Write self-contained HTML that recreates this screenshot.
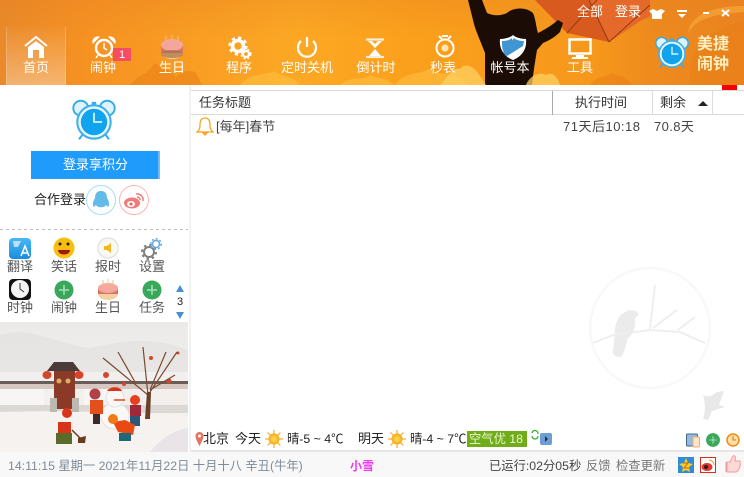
<!DOCTYPE html>
<html><head><meta charset="utf-8"><style>
html,body{margin:0;padding:0;background:#fff}
#a{position:relative;width:744px;height:477px;overflow:hidden;font-family:"Liberation Sans","Noto Sans CJK SC",sans-serif;font-size:13px;color:#333;background:#fff}
.t{position:absolute;white-space:nowrap;line-height:16px}
.n{color:#fff;font-size:13px;text-align:center;width:70px}
.g{color:#555;font-size:13px;text-align:center;width:44px}
svg{position:absolute;left:0;top:0;overflow:visible}
</style></head><body><div id="a">
<svg width="744" height="477" viewBox="0 0 744 477">
<defs>
<linearGradient id="h" x1="0" x2="1" y1="0" y2="0"><stop offset="0" stop-color="#ea8a2a"/><stop offset=".12" stop-color="#f69222"/><stop offset=".4" stop-color="#fca824"/><stop offset=".55" stop-color="#fba01c"/><stop offset=".8" stop-color="#f6981c"/><stop offset=".88" stop-color="#ee8a1e"/><stop offset="1" stop-color="#ec8420"/></linearGradient>
<linearGradient id="h2" x1="0" x2="0" y1="0" y2="1"><stop offset="0" stop-color="#e07a20" stop-opacity=".25"/><stop offset=".45" stop-color="#e07a20" stop-opacity="0"/></linearGradient>
<linearGradient id="sel" x1="0" x2="0" y1="0" y2="1"><stop offset="0" stop-color="#fff" stop-opacity=".02"/><stop offset="1" stop-color="#fff" stop-opacity=".34"/></linearGradient>
<linearGradient id="sky" x1="0" x2="0" y1="0" y2="1"><stop offset="0" stop-color="#eceae8"/><stop offset=".4" stop-color="#f2f0ee"/><stop offset="1" stop-color="#f4f1ee"/></linearGradient>
<linearGradient id="btn" x1="0" x2="0" y1="0" y2="1"><stop offset="0" stop-color="#48b8f4"/><stop offset="1" stop-color="#1a8ce0"/></linearGradient>
<radialGradient id="sun"><stop offset="0" stop-color="#ffe060"/><stop offset="1" stop-color="#f8a810"/></radialGradient>
<g id="plus"><circle r="9.500" fill="#3aa85a"/><path d="M-5 0H5M0-5V5" stroke="#a8e0b8" stroke-width="1.500"/></g>
<g id="sunny"><g stroke="#f5b040" stroke-width="1.300"><path d="M0-9V9M-9 0H9M-6.400-6.400L6.400 6.400M-6.400 6.400L6.400-6.400"/></g><circle r="5.500" fill="url(#sun)"/></g>
<g id="alarm"><circle cx="-11.500" cy="-12" r="6.500" fill="#dff3fc" stroke="#38ace8" stroke-width="1.700"/><circle cx="11.500" cy="-12" r="6.500" fill="#dff3fc" stroke="#38ace8" stroke-width="1.700"/><path d="M-10 11L-13 15M10 11L13 15" stroke="#38ace8" stroke-width="1.800"/><path d="M-2-16H2" stroke="#38ace8" stroke-width="3"/><circle r="14.500" fill="#eaf7fd" stroke="#3fb0ea" stroke-width="1.800"/><circle r="11.500" fill="#10a4ee"/><path d="M0-8V0H7" fill="none" stroke="#fff" stroke-width="1.300"/></g>
</defs>
<rect width="744" height="85" fill="url(#h)"/>
<rect width="744" height="85" fill="url(#h2)"/>
<path d="M130 85c8-12 18-8 24-22 8 4 16 6 22 14 5-6 14-8 20-4l6 12z" fill="#e87c14" opacity=".5"/>
<path d="M240 85c12-14 24-8 34-14 8 6 18 4 26 14zM340 85c12-10 22-4 30-10 8 4 16 2 24 10zM395 85c10-14 24-10 34-16 10 8 26 0 38 16z" fill="#ffc040" opacity=".6"/>
<path d="M590 85c6-10 14-6 22-12 6 4 14 2 20 12z" fill="#e67a12" opacity=".45"/>
<path d="M690 85c-2-20 0-45 40-60l14-4v64z" fill="#e67a12" opacity=".3"/>
<path d="M688 34c6-14 24-20 56-22v-6c-30 0-54 8-56 28z" fill="#f9b040" opacity=".55"/>
<path d="M535 0H650V16L640 21 609 42 567 33Z" fill="#d85a1e"/>
<path d="M589 0H650V16L640 21 609 42Z" fill="#e4692a"/>
<path d="M567 33L597 0M589 0L609 42M609 42L650 5" stroke="#953a10" fill="none"/>
<path d="M468 0H482L487 13C494 16 500 16 507 13C512 8 525 6 533 13C536 20 536 27 538 33C544 30 551 26 558 20L563 23 560 32C555 37 550 40 543 43L537 50C535 62 533 74 532 85H485V53C481 42 475 30 473 20Z" fill="#1b0c05"/>
<path d="M440 85c6-4 10-18 20-16 4-6 12-4 18 4l8 12zM526 85c3-8 12-14 20-10 6-4 12 2 14 10z" fill="#ffd060" opacity=".75"/>
<rect x="6" y="27" width="60" height="58" fill="url(#sel)"/>
<path d="M6.500 27V85M65.500 27V85" stroke="#fff" opacity=".22"/>
<path d="M25 46L36 37 47 46" stroke="#fff" stroke-width="2" fill="none"/>
<path d="M28 47L36 41 44 47V58H39V50H33V58H28Z" fill="#fff"/>
<g transform="translate(104 48)" fill="none" stroke="#fff" stroke-width="2.400"><circle r="8"/><path d="M0-5V0L3 2" stroke-width="1.500"/><path d="M-5-11A5 5 0 0 0-11-5ZM5-11A5 5 0 0 1 11-5Z" fill="#fff" stroke-width="1"/><path d="M-6 7L-8 10M6 7L8 10" stroke-width="1.500"/></g>
<rect x="113" y="48" width="18" height="13" fill="#f64d63"/>
<g transform="translate(172 48)"><ellipse cx="0" cy="4" rx="11" ry="7" fill="#f4d0a0"/><rect x="-11" y="-3" width="22" height="8" fill="#d9746a"/><ellipse cx="0" cy="-3" rx="11" ry="6" fill="#f3a69c"/><ellipse cx="0" cy="6" rx="11" ry="4" fill="#a87040" opacity=".7"/><path d="M-6-12v5M0-13v6M6-12v5" stroke="#f8c080"/></g>
<g fill="none" stroke="#fff"><circle cx="238" cy="46" r="5.500" stroke-width="3.600"/><circle cx="238" cy="46" r="8.300" stroke-width="2.600" stroke-dasharray="3.200 3.300"/><circle cx="246" cy="54" r="3" stroke-width="2.200"/><circle cx="246" cy="54" r="4.800" stroke-width="1.400" stroke-dasharray="2 2"/></g>
<g fill="none" stroke="#fff" stroke-width="2.200"><path d="M301 41a9 9 0 1 0 12 0"/><path d="M307 37V47"/></g>
<path d="M366 39.500H384M366 57H384" stroke="#f5edd8" stroke-width="2.200"/><path d="M368 41L375 48 382 41H378L375 44 372 41Z" fill="#fff"/><path d="M369 56L375 49 381 56Z" fill="#fff"/>
<g transform="translate(445 48)" fill="none" stroke="#fff" stroke-width="2"><circle r="8.500"/><path d="M-6-12L-3-9M6-12L3-9M-3-12H3"/></g><circle cx="445" cy="48" r="3.500" fill="#ffe8b8"/>
<path d="M500 39C506 39 511 37 513 35C515 37 520 39 526 39C527 48 523 56 513 60C503 56 499 48 500 39Z" fill="#fff"/>
<path d="M502 41C506 41 510 40 512 38V46L503 51C502 48 502 44 502 41ZM514 38C516 40 520 41 524 41L523 46L507 56C505 55 504 54 503 52Z" fill="#3f96d2"/>
<rect x="569.500" y="39.500" width="21" height="14" fill="none" stroke="#fff" stroke-width="2.500"/><path d="M576 55H584V57H588V59H572V57H576Z" fill="#fff"/>
<use href="#alarm" transform="translate(672 54) scale(.9)"/>
<path d="M649 11L653 9 657 11 661 9 665 11 662 14V19H652V14Z" fill="#fff"/>
<path d="M677 10H687V12H677ZM678 14H686L682 18Z" fill="#fff"/>
<path d="M703 13H709" stroke="#fff" stroke-width="2"/><path d="M722 10L729 16M729 10L722 16" stroke="#fff" stroke-width="2"/>
<rect x="722" y="85" width="15" height="5" fill="#f80000"/>
<rect x="191" y="90" width="553" height="1" fill="#d8d8d8"/>
<rect x="191" y="114" width="553" height="1" fill="#d8d8d8"/>
<rect x="552" y="91" width="1" height="24" fill="#a8a8b0"/><rect x="652" y="91" width="1" height="24" fill="#dcdcdc"/><rect x="712" y="91" width="1" height="24" fill="#dcdcdc"/>
<path d="M698 106L703 101 708 106Z" fill="#222"/>
<path d="M205 118C201 118 200 121 200 125C200 129 199 130 197 132H213C211 130 210 129 210 125C210 121 209 118 205 118ZM203 133H207L205 135Z" fill="none" stroke="#f7a521" stroke-width="1.300"/>
<use href="#alarm" transform="translate(94 122) scale(1.150)"/>
<rect x="31" y="151" width="128" height="28" fill="#1e9bfb"/><rect x="158" y="151" width="2" height="28" fill="#6fbcf8"/>
<circle cx="101" cy="200" r="14.500" fill="#fff" stroke="#a8dcf4"/><circle cx="134" cy="200" r="14.500" fill="#fff" stroke="#fdb4b4"/>
<path d="M101 191C96 191 95 195 95 198C93 201 92 205 94 207L96 205C97 208 105 208 106 205L108 207C110 205 109 201 107 198C107 195 106 191 101 191Z" fill="#63bbe8"/>
<ellipse cx="132" cy="203" rx="8" ry="5.500" fill="#f27b78"/><ellipse cx="131" cy="204" rx="4" ry="3" fill="#fff"/><circle cx="131" cy="204" r="1.500" fill="#e85e5c"/><path d="M136 194A6 6 0 0 1 143 201M137 197A3 3 0 0 1 140 200" fill="none" stroke="#f27b78" stroke-width="1.500"/>
<path d="M0 229.500H188" stroke="#bbb" stroke-dasharray="3 3"/>
<rect x="9" y="238" width="22" height="21" rx="4" fill="url(#btn)"/><path d="M13 241H21L18 247H14Z" fill="#b8e0fa"/><path d="M21 256L25 246 29 256M22 253H28" fill="none" stroke="#fff" stroke-width="1.500"/>
<circle cx="64" cy="248" r="10.500" fill="#f9bf10"/><path d="M58 250H70C70 256 58 256 58 250Z" fill="#a01818"/><circle cx="60" cy="244" r="1.500" fill="#222"/><circle cx="68" cy="244" r="1.500" fill="#222"/>
<circle cx="108" cy="248" r="10" fill="#f8f8f4" stroke="#e4e4e4" stroke-width="1.500"/><path d="M104 246H107L111 243V253L107 250H104Z" fill="#f5b81c"/>
<g fill="none"><circle cx="149" cy="252" r="5" stroke="#808080" stroke-width="2"/><circle cx="149" cy="252" r="7" stroke="#808080" stroke-width="2" stroke-dasharray="2.500 3"/><circle cx="156" cy="244" r="3.500" stroke="#6aa8dc" stroke-width="1.500"/><circle cx="156" cy="244" r="5.200" stroke="#6aa8dc" stroke-width="1.500" stroke-dasharray="2 2"/></g>
<rect x="9" y="279" width="22" height="21" rx="4" fill="#111"/><circle cx="20" cy="289" r="9" fill="#f4f4f4"/><path d="M20 283V289L24 292" stroke="#333" fill="none"/>
<use href="#plus" x="64" y="290"/>
<g transform="translate(108 290)"><ellipse cx="0" cy="4" rx="10" ry="6" fill="#f4d0a0"/><rect x="-10" y="-2" width="20" height="6" fill="#d9746a"/><ellipse cx="0" cy="-2" rx="10" ry="5" fill="#f4a89e"/><path d="M-5-10v5M0-11v6M5-10v5" stroke="#f8c080"/></g>
<use href="#plus" x="152" y="290"/>
<path d="M176 292L180 285 184 292ZM176 312L180 319 184 312Z" fill="#4a90d0"/>
<rect x="0" y="322" width="188" height="130" fill="url(#sky)"/>
<path d="M0 335C30 325 60 345 90 348C120 342 150 335 188 350V372H0Z" fill="#e0dedc" opacity=".55"/>
<path d="M0 382H188V405H0Z" fill="#f2efec"/><path d="M0 381H188V384H0Z" fill="#6a5c58"/><path d="M0 384H188V389H0Z" fill="#d6c8c0"/>
<path d="M0 389H44V405H0ZM84 389H110V405H84Z" fill="#f8f6f5"/>
<path d="M0 405H188V413H0Z" fill="#dcd8d4"/>
<path d="M0 412C60 410 120 412 188 416V452H0Z" fill="#f5f2f0"/>
<path d="M188 428C170 432 160 440 150 452H188Z" fill="#dcd6de" opacity=".5"/>
<rect x="54" y="371" width="21" height="38" fill="#8c3a28"/><path d="M47 371L54 362H73L80 371Z" fill="#4a3a3a"/><rect x="50" y="398" width="7" height="14" fill="#bcb8b2"/><rect x="72" y="398" width="7" height="14" fill="#bcb8b2"/>
<circle cx="59" cy="381" r="2.500" fill="#d8b060"/><circle cx="68" cy="381" r="2.500" fill="#d8b060"/>
<ellipse cx="47" cy="375" rx="4.500" ry="4" fill="#d8442a"/><ellipse cx="79" cy="375" rx="4.500" ry="4" fill="#d8442a"/><circle cx="106" cy="375" r="3" fill="#d8442a"/><circle cx="124" cy="384" r="2" fill="#d8442a"/><circle cx="151" cy="358" r="2" fill="#d8442a"/><circle cx="169" cy="381" r="2.500" fill="#d8442a"/><circle cx="178" cy="353" r="1.500" fill="#d8442a"/>
<path d="M148 395L103 358M135 382L118 352M148 395L143 347M150 392L177 352M150 390L175 375M150 390L166 352" stroke="#7a4a30" stroke-width="1.200" fill="none"/><path d="M145 419L147 392 151 392 150 419Z" fill="#6a4028"/>
<ellipse cx="115" cy="416" rx="14" ry="13" fill="#faf8f7" stroke="#e2dedb" stroke-width=".8"/><circle cx="115" cy="398" r="9" fill="#faf8f7" stroke="#dedad7" stroke-width=".8"/><path d="M114 400H125" stroke="#e04a1a" stroke-width="1.500"/><path d="M107 391C110 386 120 386 122 391Z" fill="#d8341a"/>
<rect x="90" y="400" width="13" height="14" fill="#e4501c"/><circle cx="95" cy="394" r="5.500" fill="#b44048"/><rect x="93" y="414" width="7" height="10" fill="#3a2a2a"/>
<rect x="130" y="405" width="11" height="11" fill="#a02838"/><circle cx="135" cy="400" r="5" fill="#e8401c"/><rect x="130" y="416" width="10" height="10" fill="#2c5878"/>
<path d="M113 422L125 420 135 425 133 435 118 432Z" fill="#ea4a12"/><circle cx="113" cy="419" r="5" fill="#ef7a18"/><rect x="119" y="433" width="12" height="8" fill="#1e6878"/>
<path d="M58 422H71V433H58Z" fill="#d8341a"/><circle cx="67" cy="413" r="5" fill="#d8341a"/><rect x="56" y="433" width="16" height="11" fill="#5a6a2a"/><path d="M72 430L82 440" stroke="#6a3a1a" stroke-width="1.500"/><path d="M78 438L86 436 85 443 78 443Z" fill="#6a3a1a"/>
<rect x="0" y="452" width="744" height="25" fill="#f8f8f8"/>
<rect x="190" y="450" width="554" height="2" fill="#e6e6e6"/>
<rect x="189" y="85" width="2" height="366" fill="#f2f2f2"/>
<circle cx="650" cy="328" r="60" fill="none" stroke="#f8f8f6" stroke-width="2.500"/>
<path d="M613 350C616 338 612 322 622 314C628 309 635 309 639 314L635 318C636 326 634 334 628 338C626 345 624 356 620 357C616 357 612 355 613 350Z" fill="#ebebeb"/>
<path d="M593 343L613 335 650 330 680 332 705 343M650 329L655 285M653 328L677 310M678 330L695 317" fill="none" stroke="#eeeeee" stroke-width="2"/>
<path d="M703 395C708 398 712 396 717 392L724 391 719 405 725 407 712 411 708 420 703 419C706 412 705 402 703 395Z" fill="#e8e8e8"/>
<path d="M195.500 436A4 4 0 0 1 203.500 436C203.500 439 201 443 199.500 446C198 443 195.500 439 195.500 436Z" fill="#e4735f"/><circle cx="199.500" cy="436" r="1.500" fill="#fff"/>
<use href="#sunny" x="274" y="439"/><use href="#sunny" x="397" y="439"/>
<rect x="467" y="431" width="60" height="16" fill="#70ad18"/>
<path d="M532 433A3 3 0 0 1 538 434M538 436A3 3 0 0 1 532 436" fill="none" stroke="#3cb030" stroke-width="1.300"/>
<rect x="540" y="433" width="12" height="12" rx="2" fill="#6c9ed4"/><path d="M545 436L548 439 545 442Z" fill="#234"/>
<rect x="686.500" y="434" width="11" height="12" rx="1" fill="#90bce0" stroke="#4a6a88"/><rect x="693" y="437" width="6.500" height="10" rx="1" fill="#fde4c8" stroke="#f2a868"/>
<g transform="translate(713 440) scale(.73)"><use href="#plus"/></g>
<circle cx="733" cy="440" r="6" fill="#fde0a8" stroke="#f08a18" stroke-width="1.500"/><path d="M733 436V440H736" fill="none" stroke="#e07810"/>
<rect x="678" y="457" width="16" height="16" fill="#2f8ad8"/><path d="M686 458L688 463 693 464 689 467 690 472 686 470 682 472 683 467 679 464 684 463Z" fill="#fcd020"/><path d="M683 463H688L684 468H689" stroke="#d06010" fill="none"/>
<rect x="700.500" y="457.500" width="15" height="15" fill="#fff" stroke="#d83020"/><ellipse cx="707" cy="467" rx="5.500" ry="4" fill="#e6352b"/><circle cx="706" cy="467" r="2" fill="#222"/><path d="M709 460A5 5 0 0 1 714 465" stroke="#f0a020" fill="none"/>
<path d="M727 462H730L733 456C735 455 736 457 735 461H740C741 466 739 471 736 472H727ZM726 462V472" fill="#ffd8d8" stroke="#f49898"/>
</svg>
<div class="t n" style="left:1px;top:60px">首页</div>
<div class="t n" style="left:68px;top:60px">闹钟</div>
<div class="t" style="left:119px;top:47px;color:#fff;font-size:11px">1</div>
<div class="t n" style="left:137px;top:60px">生日</div>
<div class="t n" style="left:204px;top:60px">程序</div>
<div class="t n" style="left:272px;top:60px">定时关机</div>
<div class="t n" style="left:341px;top:60px">倒计时</div>
<div class="t n" style="left:408px;top:60px">秒表</div>
<div class="t n" style="left:475px;top:60px">帐号本</div>
<div class="t n" style="left:545px;top:60px">工具</div>
<div class="t" style="left:577px;top:4px;color:#fff">全部</div>
<div class="t" style="left:615px;top:4px;color:#fff">登录</div>
<div class="t" style="left:697px;top:35px;color:#fdeec0;font-size:16px;line-height:20px;font-weight:bold;width:34px">美捷<br>闹钟</div>
<div class="t" style="left:199px;top:95px">任务标题</div>
<div class="t" style="left:575px;top:95px">执行时间</div>
<div class="t" style="left:660px;top:95px">剩余</div>
<div class="t" style="left:216px;top:119px;color:#444">[每年]春节</div>
<div class="t" style="left:563px;top:119px;color:#444;letter-spacing:.5px">71天后10:18</div>
<div class="t" style="left:654px;top:119px;color:#444;letter-spacing:.4px">70.8天</div>
<div class="t" style="left:63px;top:157px;color:#fff">登录享积分</div>
<div class="t" style="left:34px;top:192px;color:#222">合作登录</div>
<div class="t g" style="left:-2px;top:259px">翻译</div><div class="t g" style="left:42px;top:259px">笑话</div><div class="t g" style="left:86px;top:259px">报时</div><div class="t g" style="left:130px;top:259px">设置</div>
<div class="t g" style="left:-2px;top:300px">时钟</div><div class="t g" style="left:42px;top:300px">闹钟</div><div class="t g" style="left:86px;top:300px">生日</div><div class="t g" style="left:130px;top:300px">任务</div>
<div class="t" style="left:177px;top:294px;font-size:11px;color:#222">3</div>
<div class="t" style="left:203px;top:431px;color:#222">北京</div>
<div class="t" style="left:235px;top:431px;color:#222">今天</div>
<div class="t" style="left:287px;top:431px;color:#222;font-size:12.300px">晴-5 ~ 4℃</div>
<div class="t" style="left:358px;top:431px;color:#222">明天</div>
<div class="t" style="left:410px;top:431px;color:#222;font-size:12.300px">晴-4 ~ 7℃</div>
<div class="t" style="left:469px;top:431px;color:#e8f8d0;font-size:12.300px">空气优 18</div>
<div class="t" style="left:8px;top:458px;color:#7f8b98;font-size:12.300px">14:11:15 星期一 2021年11月22日 十月十八 辛丑(牛年)</div>
<div class="t" style="left:350px;top:458px;color:#f03cf0;font-size:12px;font-weight:bold">小雪</div>
<div class="t" style="left:489px;top:458px;color:#444;font-size:12.300px">已运行:02分05秒</div>
<div class="t" style="left:586px;top:458px;color:#777;font-size:12.300px">反馈</div>
<div class="t" style="left:616px;top:458px;color:#777;font-size:12.300px">检查更新</div>
</div></body></html>
